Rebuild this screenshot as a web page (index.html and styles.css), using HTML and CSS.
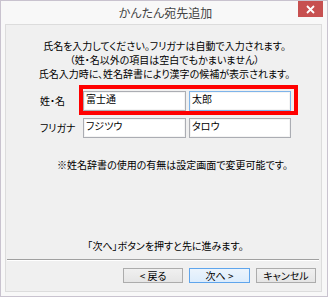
FILE: index.html
```html
<!DOCTYPE html>
<html lang="ja">
<head>
    <meta charset="UTF-8">
    <title>かんたん宛先追加</title>
    <link rel="stylesheet" href="styles.css">
</head>
<body>
    <div class="window">
        <div class="title-bar">
            <span class="title">かんたん宛先追加</span>
            <button class="close-button" aria-label="閉じる">
                <svg width="9" height="9" viewBox="0 0 9 9"><path d="M1 1L8 8M8 1L1 8" stroke="#fff" stroke-width="1.8"/></svg>
            </button>
        </div>

        <div class="panel">
            <p class="intro">
                氏名を入力してください。フリガナは自動で入力されます。<br>
                （姓・名以外の項目は空白でもかまいません）<br>
                氏名入力時に、姓名辞書により漢字の候補が表示されます。
            </p>

            <div class="name-form">
                <span class="field-label">姓・名</span>
                <input class="field" type="text" value="富士通">
                <input class="field focused" type="text" value="太郎">
                <span class="field-label">フリガナ</span>
                <input class="field" type="text" value="フジツウ">
                <input class="field" type="text" value="タロウ">
                <div class="highlight"></div>
            </div>

            <p class="note">※姓名辞書の使用の有無は設定画面で変更可能です。</p>

            <div class="spacer"></div>

            <p class="hint">「次へ」ボタンを押すと先に進みます。</p>
            <div class="separator"></div>

            <div class="buttons">
                <button class="dlg-button">&lt; 戻る</button>
                <button class="dlg-button default">次へ &gt;</button>
                <button class="dlg-button">キャンセル</button>
            </div>
        </div>
    </div>
</body>
</html>
```

FILE: styles.css
```css
body {
    margin: 0;
    font-family: "Noto Sans CJK JP", "Noto Sans", sans-serif;
    font-size: 10px;
    color: #000;
    background: #fff;
}

.window {
    width: 328px;
    height: 297px;
    box-sizing: border-box;
    border: 1px solid #c9c3cf;
    background: #f8f8f8;
    display: flex;
    flex-direction: column;
}

.title-bar {
    position: relative;
    height: 23px;
    display: flex;
    justify-content: center;
    align-items: center;
}

.title {
    font-size: 12px;
    color: #444;
    font-feature-settings: "palt";
    margin-left: 3px;
}

.close-button {
    position: absolute;
    top: 0;
    right: 4px;
    width: 25px;
    height: 16px;
    padding: 0;
    border: none;
    background: #c75050;
    display: flex;
    justify-content: center;
    align-items: center;
}

.panel {
    flex: 1;
    margin: 0 5px 4px 4px;
    border: 1px solid #dcdcdc;
    background: #f0f0f0;
    display: flex;
    flex-direction: column;
    padding-top: 14px;
    padding-bottom: 8px;
}

p {
    margin: 0;
    text-align: center;
    line-height: 14px;
    font-feature-settings: "palt";
}

.intro {
    margin-left: 2px;
}

.name-form {
    position: relative;
    display: grid;
    grid-template-columns: 40px 103px 102px;
    grid-auto-rows: 20px;
    column-gap: 3px;
    row-gap: 7px;
    margin: 10px 0 0 34px;
}

.field-label {
    font-feature-settings: "palt";
    line-height: 20px;
    align-self: center;
}

.field {
    box-sizing: border-box;
    width: 100%;
    height: 20px;
    margin: 0;
    padding: 0 2px 5px;
    border: 1px solid #abadb3;
    box-shadow: inset 0 0 0 1px #f4f4f4;
    background: #fff;
    font-family: inherit;
    font-size: 10px;
    font-feature-settings: "palt";
    line-height: 12px;
    outline: none;
}

.field.focused {
    border-color: #7eb4ea;
}

.highlight {
    position: absolute;
    left: 39px;
    top: -6px;
    width: 219px;
    height: 30px;
    box-sizing: border-box;
    border: 4px solid #ff0000;
    pointer-events: none;
}

.note {
    margin-top: 20px;
    margin-left: 18px;
}

.spacer {
    flex: 1;
}

.hint {
    margin-left: 4px;
}

.separator {
    margin: 6px 2px 0 1px;
    height: 1px;
    background: #a0a0a0;
    border-bottom: 1px solid #fff;
}

.buttons {
    display: flex;
    justify-content: flex-end;
    gap: 6px;
    margin-top: 7px;
    padding-right: 5px;
}

.dlg-button {
    width: 60px;
    height: 15px;
    padding: 0;
    border: 1px solid #acacac;
    background: linear-gradient(#f0f0f0, #e5e5e5);
    font-family: inherit;
    font-size: 10px;
    font-feature-settings: "palt";
    line-height: 13px;
    color: #000;
}

.dlg-button.default {
    width: 61px;
    border-color: #5fa5ec;
    background: linear-gradient(#ecf4fc, #dcecfc);
}
```
